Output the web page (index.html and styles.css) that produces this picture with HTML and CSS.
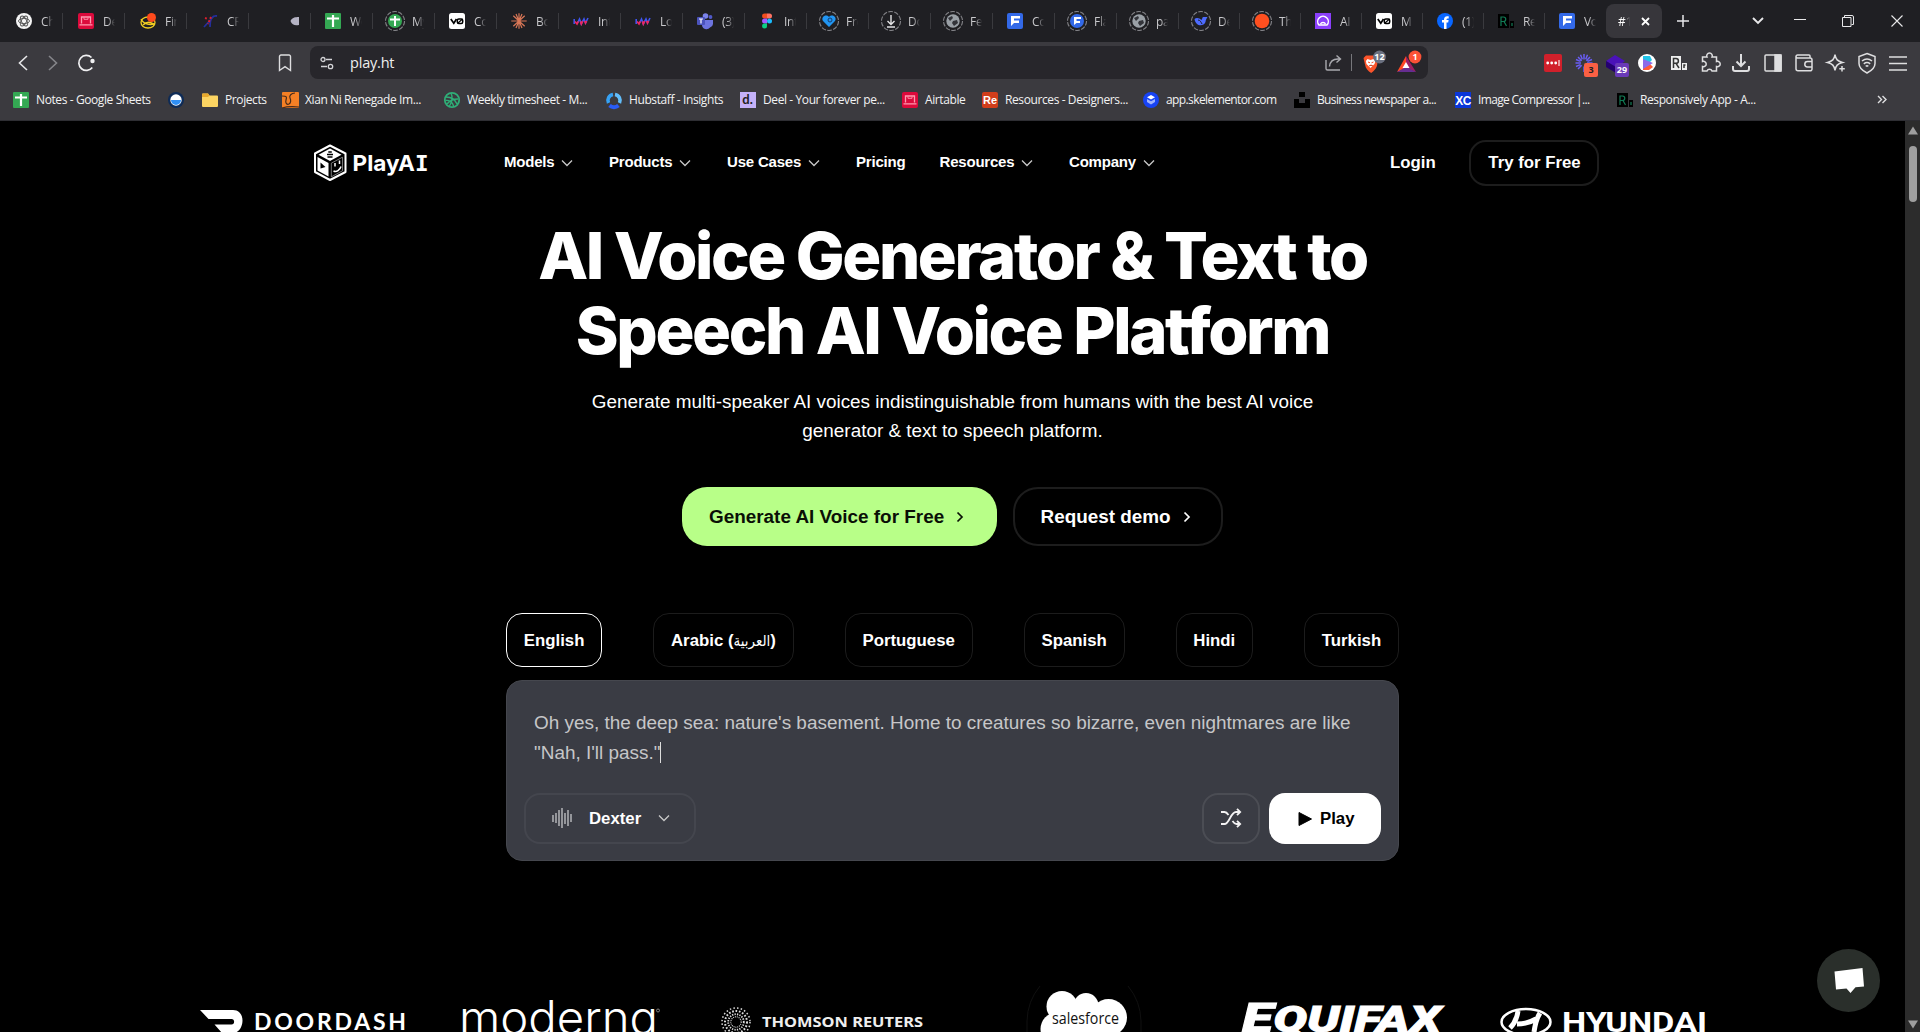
FILE: index.html
```
<!DOCTYPE html>
<html lang="en">
<head>
<meta charset="utf-8">
<title>AI Voice Generator</title>
<link rel="stylesheet" href="styles.css">
</head>
<body>
<svg class="defs" width="0" height="0" aria-hidden="true">
  <symbol id="sheet" viewBox="0 0 16 16"><rect width="16" height="16" rx="1" fill="#34a853"/><path d="M2 5.500h12M8 2v12" stroke="#fff" stroke-width="2.200"/></symbol>
  <symbol id="laptop" viewBox="0 0 16 16"><rect width="16" height="16" rx="2" fill="#dc0a3c"/><path d="M3.500 10.500V4h9v6.500M1.500 11.800h13" stroke="#ff9bb0" stroke-width="1.300" fill="none"/><path d="M6 4.500v1.800h4V4.500" stroke="#ff9bb0" stroke-width=".9" fill="none"/></symbol>
  <symbol id="vzero" viewBox="0 0 16 16"><rect width="16" height="16" rx="2.500" fill="#fff"/><path d="M1.800 6l3 4.200L7.500 6" stroke="#000" stroke-width="1.700" fill="none"/><rect x="8.300" y="6" width="5.400" height="4.400" rx="1.500" fill="none" stroke="#000" stroke-width="1.500"/><path d="M9 10l4.500-4" stroke="#000" stroke-width="1.100"/></symbol>
  <symbol id="wave" viewBox="0 0 16 16"><path d="M1.200 6v5M4 11l2.500-5 1.800 5L11 6l1.500 4L15 5" stroke="#3f55f0" stroke-width="1.600" fill="none"/><path d="M2 8.500L4 11l1.300-2.600M7.500 8.500l.8 2.500 1.300-2.800M11.700 8l.8 2 1-2" stroke="#f0255f" stroke-width="1.700" fill="none"/></symbol>
  <symbol id="ring" viewBox="0 0 20 20"><circle cx="10" cy="10" r="9.500" fill="none" stroke="#808085" stroke-width="1.100" stroke-dasharray="4.600 1.370"/></symbol>
  <symbol id="globe" viewBox="0 0 16 16"><circle cx="8" cy="8" r="6.700" fill="#9aa0a6"/><path d="M3 5l4-2 1 2-3 3zM8 8l4-1 1 3-4 3-2-3z" fill="#33343a"/></symbol>
  <symbol id="flag" viewBox="0 0 16 16"><rect width="16" height="16" rx="2" fill="#3369e8"/><path d="M4 3h9v2.500H7v2h5V10H7l-3 3z" fill="#fff"/></symbol>
  <symbol id="rr" viewBox="0 0 16 16"><path d="M0 1h11v14H0zM12 8h4v7h-4z" fill="#000"/><path d="M3 13V4h2.500a2.200 2.200 0 010 4.500H3M6 8.500l2.500 4.500M14 13v-3" stroke="#117a55" stroke-width="1.200" fill="none"/></symbol>
  <symbol id="down" viewBox="0 0 12 8"><path d="M1 1.500l5 5 5-5" stroke="currentColor" stroke-width="1.300" fill="none"/></symbol>
  <symbol id="right" viewBox="0 0 8 12"><path d="M1.500 1.500L6 6l-4.500 4.500" stroke="currentColor" stroke-width="1.700" fill="none"/></symbol>
</svg>

<header class="browser">
  <div class="tabstrip">
    <div class="tab"><svg class="fav"><circle cx="8" cy="8" r="8" fill="#f5f5f5"/><g fill="none" stroke="#555" stroke-width=".9"><ellipse cx="8" cy="8" rx="5.500" ry="2.600"/><ellipse cx="8" cy="8" rx="5.500" ry="2.600" transform="rotate(60 8 8)"/><ellipse cx="8" cy="8" rx="5.500" ry="2.600" transform="rotate(120 8 8)"/></g></svg><span>Ch</span></div>
    <div class="tab"><svg class="fav"><use href="#laptop"/></svg><span>De</span></div>
    <div class="tab"><svg class="fav"><g fill="none" stroke="#f2cf22" stroke-width="1.300"><ellipse cx="8" cy="9.500" rx="7" ry="5.500"/><path d="M1 6c3 6 9 6 14 5M3 12c4-4 7-3 11-1"/></g><circle cx="11.500" cy="4.500" r="4.500" fill="#ff4a1c"/></svg><span>Fin</span></div>
    <div class="tab"><svg class="fav"><path d="M2 14L12 3M8 14c0-8 2-12 7-11" stroke="#232f9b" stroke-width="1.800" fill="none"/><path d="M3 5l3 1M9 4L6 11" stroke="#d91e2e" stroke-width="2" stroke-dasharray="2 1.500" fill="none"/></svg><span>CR</span></div>
    <div class="tab tab-audio"><svg class="fav"><path d="M3.500 8C5 4.500 8 4 12 4v8c-4 1-7 0-8.500-4z" fill="#b5b3c4"/></svg></div>
    <div class="tab"><svg class="fav"><use href="#sheet"/></svg><span>Wo</span></div>
    <div class="tab"><svg class="fav"><use href="#ring" x="-2" y="-2" width="20" height="20"/><circle cx="8" cy="8" r="7" fill="#34a853"/><path d="M3 6.500h10M8 3v10" stroke="#fff" stroke-width="2"/></svg><span>My</span></div>
    <div class="tab"><svg class="fav"><use href="#vzero"/></svg><span>Co</span></div>
    <div class="tab"><svg class="fav"><path d="M8 .3v15.400M.3 8h15.400M2.300 2.800l11.400 10.400M13.700 2.800L2.300 13.200M5 1l6 14M11 1L5 15" stroke="#d97757" stroke-width="1.200"/></svg><span>Bo</span></div>
    <div class="tab"><svg class="fav"><use href="#wave"/></svg><span>Int</span></div>
    <div class="tab"><svg class="fav"><use href="#wave"/></svg><span>Lo</span></div>
    <div class="tab"><svg class="fav"><circle cx="8.500" cy="3" r="2.800" fill="#7b83eb"/><circle cx="13.500" cy="4" r="1.900" fill="#5059c9"/><path d="M5 7h11v4a4 4 0 01-3 3.500A4.500 4.500 0 015 12z" fill="#6d74df"/><rect y="4" width="8" height="8" rx="1" fill="#4b53bc"/><path d="M2 6h4M4 6v4.500" stroke="#fff" stroke-width="1.200"/></svg><span>(3)</span></div>
    <div class="tab"><svg class="fav"><path d="M8 .5H5.500a2.500 2.500 0 000 5H8z" fill="#f24e1e"/><path d="M8 .5h2.500a2.500 2.500 0 010 5H8z" fill="#ff7262"/><path d="M8 5.500H5.500a2.500 2.500 0 000 5H8z" fill="#a259ff"/><circle cx="10.500" cy="8" r="2.500" fill="#1abcfe"/><path d="M8 10.500H5.500a2.500 2.500 0 102.500 2.500z" fill="#0acf83"/></svg><span>Int</span></div>
    <div class="tab"><svg class="fav"><use href="#ring" x="-2" y="-2" width="20" height="20"/><path d="M8 14L2 8C-.5 4 5 .5 8 4c3-3.500 8.500 0 6 4z" fill="#2196f3"/><circle cx="9" cy="7" r="2" fill="none" stroke="#173b6b"/></svg><span>Fre</span></div>
    <div class="tab"><svg class="fav"><use href="#ring" x="-2" y="-2" width="20" height="20"/><path d="M8 2v9M4.500 8L8 11.500 11.500 8M4 14h8" stroke="#e4e4e6" stroke-width="1.400" fill="none"/></svg><span>Do</span></div>
    <div class="tab"><svg class="fav"><use href="#ring" x="-2" y="-2" width="20" height="20"/><use href="#globe"/></svg><span>Fee</span></div>
    <div class="tab"><svg class="fav"><use href="#flag"/></svg><span>Co</span></div>
    <div class="tab"><svg class="fav"><use href="#ring" x="-2" y="-2" width="20" height="20"/><circle cx="8" cy="8" r="7" fill="#3369e8"/><path d="M5 4h7v2H7.500v2H11v2H7.500L5 12z" fill="#fff"/></svg><span>Fla</span></div>
    <div class="tab"><svg class="fav"><use href="#ring" x="-2" y="-2" width="20" height="20"/><use href="#globe"/></svg><span>pa</span></div>
    <div class="tab tab-narrow"><svg class="fav"><use href="#ring" x="-2" y="-2" width="20" height="20"/><path d="M1.500 6c2-2 5-1 7 1 1-1 .5-3 2-3l4 0c-1 2-2 3-2 5-2 5-10 4.500-11-3z" fill="#4d6bfe"/><path d="M5 7c2 0 3 2 4 4" stroke="#1f1f23" fill="none"/></svg><span>De</span></div>
    <div class="tab tab-narrow"><svg class="fav"><use href="#ring" x="-2" y="-2" width="20" height="20"/><circle cx="8" cy="8" r="7.300" fill="#ff4f1f"/></svg><span>Th</span></div>
    <div class="tab tab-narrow"><svg class="fav"><rect width="16" height="16" fill="#8b3ffc"/><path d="M4 12a5.300 5.300 0 118 0zM5.500 11c1-2 4-2 5 0" stroke="#fff" stroke-width="1.500" fill="none"/></svg><span>AI</span></div>
    <div class="tab tab-narrow"><svg class="fav"><use href="#vzero"/></svg><span>M</span></div>
    <div class="tab tab-narrow"><svg class="fav"><circle cx="8" cy="8" r="8" fill="#0866ff"/><path d="M7 16V9.500H5V7h2c0-3 1.200-4.200 4.700-3.700V5.600c-1.800 0-2.200.3-2.200 1.400h2.100l-.4 2.500H9.500V16z" fill="#fff"/></svg><span>(1)</span></div>
    <div class="tab tab-narrow"><svg class="fav"><use href="#rr"/></svg><span>Re</span></div>
    <div class="tab tab-narrow tab-last"><svg class="fav"><use href="#flag"/></svg><span>Vo</span></div>
    <div class="tab-active"><span>#1</span><svg width="9" height="9"><path d="M1 1l7 7M8 1L1 8" stroke="#fff" stroke-width="1.800"/></svg></div>
    <svg class="newtab" width="12" height="12"><path d="M6 0v12M0 6h12" stroke="#e8e8ea" stroke-width="1.500"/></svg>
    <div class="winctl">
      <svg width="12" height="8"><path d="M1 1l5 5 5-5" stroke="#e8e8ea" stroke-width="1.900" fill="none"/></svg>
      <svg width="12" height="12"><path d="M0 4.500h12" stroke="#e8e8ea"/></svg>
      <svg width="12" height="12"><path d="M.5 2.500h8.500v9H.5zM2.500 2.500V.5H10a1.500 1.500 0 011.500 1.500v7.500H9.500" stroke="#e8e8ea" fill="none"/></svg>
      <svg width="12" height="12"><path d="M.5.5l11 11M11.500.5l-11 11" stroke="#e8e8ea" stroke-width="1.100"/></svg>
    </div>
  </div>

  <div class="toolbar">
    <div class="navbtns">
      <svg width="10" height="16"><path d="M9 1L1.500 8 9 15" stroke="#e6e6e8" stroke-width="1.600" fill="none"/></svg>
      <svg width="10" height="16"><path d="M1 1l7.500 7L1 15" stroke="#85858a" stroke-width="1.600" fill="none"/></svg>
      <svg width="18" height="18"><path d="M14.500 3.500a7.500 7.500 0 10.800 10" stroke="#f0f0f2" stroke-width="1.700" fill="none"/><circle cx="15.500" cy="7" r="2.200" fill="#f0f0f2"/></svg>
      <svg class="mark" width="14" height="18"><path d="M1.500 2.500a1.500 1.500 0 011.500-1.500h8a1.500 1.500 0 011.500 1.500v14L7 12.700 1.500 16.500z" stroke="#dedee0" stroke-width="1.400" fill="none"/></svg>
    </div>
    <div class="urlbar">
      <svg width="14" height="14"><g stroke="#d4d4d7" stroke-width="1.300" fill="none"><circle cx="3" cy="3.500" r="2"/><path d="M6 3.500h6M1 10.500h6"/><circle cx="10.500" cy="10.500" r="2.200"/></g></svg>
      <span class="url">play.ht</span>
      <svg class="share" width="17" height="17"><path d="M1 6v8.500a1.500 1.500 0 001.500 1.500H15M4.500 12.500C5 7.500 8 5 13 5h2M11.500 1.500L15.500 5l-4 3.500" stroke="#a9a9ae" stroke-width="1.400" fill="none"/></svg>
      <i class="vbar"></i>
      <svg class="shield" width="24" height="24"><path d="M4 4.500h9l3 3-.8 6c-.5 4-3.500 6.500-6 8.500-3-2-5.700-4.500-6.200-8.500L1.500 7z" fill="#fb542b"/><path d="M5.500 8l3 1 3-1 2 2-1 3-2 2-2 2-2-2-2-2-.6-3z" fill="#fff"/><path d="M6 11l2 .8M11.500 11l-2 .8M7 15l2-1 2 1" stroke="#fb542b"/><circle cx="17.500" cy="6" r="6.400" fill="#6b7080"/><text x="17.500" y="8.800" class="badge">12</text></svg>
      <svg class="bat" width="26" height="24"><path d="M10 5L1 21l9-4z" fill="#ff4724"/><path d="M10 5l10 16-10-4z" fill="#9e1f63"/><path d="M1 21h19l-10-5z" fill="#662d91"/><path d="M10 11l3.500 6h-7z" fill="#fff"/><circle cx="19" cy="6" r="6.400" fill="#fb5236"/><text x="19" y="8.800" class="badge">1</text></svg>
    </div>
    <div class="exts">
      <svg><rect x="3" y="3" width="18" height="18" rx="2" fill="#d1202b"/><g fill="#fff"><circle cx="6.700" cy="12" r="1.400"/><circle cx="10.700" cy="12" r="1.400"/><circle cx="14.700" cy="12" r="1.400"/><path d="M17.500 9h1v6h-1z"/></g></svg>
      <svg><g class="burst"><path d="M12 3v5.500M12 15.500V21M3.500 12H9M15 12h5.500M6 6l3.700 3.700M18 6l-3.700 3.700M6 18l3.700-3.700M8.500 3.800l1.800 4.500M15.500 3.800l-1.800 4.500M4 8.500l4.500 1.900M20 8.500l-4.500 1.900M4 15.500l4.500-1.900"/></g><rect x="12" y="12" width="14" height="14" rx="2" fill="#fb6044"/><text x="19" y="22" class="badge dark">3</text></svg>
      <svg><path d="M2 10l9-6 10 6-9 7z" fill="#4a12b8"/><path d="M2 10v6l10 6v-6z" fill="#240070"/><rect x="11" y="12" width="14" height="14" rx="2" fill="#6a3ab7"/><text x="18" y="22.200" class="badge">29</text></svg>
      <svg><circle cx="12" cy="12" r="9" fill="#fff"/><path d="M8 5h7l2 4-3 3H8z" fill="#21c4e8"/><path d="M8 12h6l4 4-4 3H8z" fill="#ff5a36"/><path d="M8 8v10l10-6z" fill="#8c6be8"/></svg>
      <svg><path d="M4 5h10v14H4zM15 12h5v7h-5z" fill="#eee"/><path class="r-glyph" d="M6.500 17V7.500H9a2.300 2.300 0 010 4.800H6.500M9 12.300l3 4.700M17 17v-3h1.500"/></svg>
      <svg><path d="M4.500 6H9a2.800 2.800 0 115 0h4.500v4.500a2.700 2.700 0 110 5V20H14a2.700 2.700 0 00-5 0H4.500v-4.500a2.700 2.700 0 100-5z"/></svg>
      <svg><path d="M12 3v12M7.500 10.500L12 15l4.500-4.500M4 15v3a2 2 0 002 2h12a2 2 0 002-2v-3" stroke-width="2"/></svg>
      <svg><rect x="4" y="4" width="16" height="16" rx="1"/><path d="M14 4h6v16h-6z" fill="#dedee0"/></svg>
      <svg><path d="M5.500 4H17a1 1 0 011 1v2M5.500 7H18a2 2 0 012 2v9a1.800 1.800 0 01-2 1.800H6a2 2 0 01-2-2V5.500A1.500 1.500 0 015.500 4M4 5.500A1.500 1.500 0 005.500 7M20 10.500h-4.500a2.700 2.700 0 000 5.400H20"/></svg>
      <svg><path d="M11 3.500c.8 5 2.500 6.700 7.500 8-5 1.300-6.700 3-7.500 8-.8-5-2.500-6.700-7.500-8 5-1.300 6.700-3 7.500-8z"/><path class="knock" d="M18 14v7.500M14.500 17.800h7"/><path d="M18 15v5.500M15.300 17.800h5.500"/></svg>
      <svg><path d="M12 2.500l8 3v7c0 4.500-4 7.500-8 9.500-4-2-8-5-8-9.500v-7zM7 10c3-2.500 7-2.500 10 0M8.800 12.800c2-1.600 4.400-1.600 6.400 0M10.700 15.300c1-.8 1.600-.8 2.600 0"/></svg>
      <svg><path d="M3 6h18M3 12.500h18M3 19h18"/></svg>
    </div>
  </div>

  <nav class="bookmarks">
    <a><svg class="fav"><use href="#sheet"/></svg><span>Notes - Google Sheets</span></a>
    <a><svg class="fav"><circle cx="8" cy="8" r="8" fill="#0e2b57"/><circle cx="8" cy="8" r="5.700" fill="#fff"/><path d="M3 8h10a5 5 0 01-10 0z" fill="#2f8ff5"/></svg></a>
    <a><svg class="fav"><path d="M0 2.500a1 1 0 011-1h5l1.500 2H15a1 1 0 011 1V14a1 1 0 01-1 1H1a1 1 0 01-1-1z" fill="#fcd462"/><path d="M0 2.500a1 1 0 011-1h5l1.500 2L6 5H0z" fill="#e8a92e"/></svg><span>Projects</span></a>
    <a><svg class="fav"><rect width="17" height="16" rx="1" fill="#f58025"/><path d="M0 4c5 0 5 1 4 4s1 5 3 4 2-4 1-6 1-5 5-5M0 16c3-1 9-2 17-1" stroke="#4a2c1a" stroke-width="1.200" fill="none"/></svg><span>Xian Ni Renegade Im...</span></a>
    <a><svg class="fav"><circle cx="8" cy="8" r="7.200" fill="none" stroke="#2fae77" stroke-width="1.800"/><path d="M2 5c5 0 9 2 11 7M3 12c3-4 6-5 11-5M7 1c2 4 1 9-2 14M1.500 8.500C5 8 9 10 10 15" stroke="#2fae77" stroke-width="1.400" fill="none"/></svg><span>Weekly timesheet - M...</span></a>
    <a><svg class="fav"><path d="M7 2.500A6 6 0 002.500 11" stroke="#36a2f5" stroke-width="3.600" fill="none"/><path d="M9 2.500A6 6 0 0113.500 11" stroke="#62bdfa" stroke-width="3.600" fill="none"/><path d="M3.500 13.500a7 7 0 009 0" stroke="#2a5cf6" stroke-width="4" fill="none"/></svg><span>Hubstaff - Insights</span></a>
    <a><svg class="fav"><rect width="16" height="16" fill="#c4b1f9"/><text x="7.500" y="12" class="ico-d">d.</text></svg><span>Deel - Your forever pe...</span></a>
    <a><svg class="fav"><use href="#laptop"/></svg><span>Airtable</span></a>
    <a><svg class="fav"><rect width="16" height="16" rx="2" fill="#d13d1b"/><text x="8" y="12.300" class="ico-re">Re</text></svg><span>Resources - Designers...</span></a>
    <a><svg class="fav"><circle cx="8" cy="8" r="8" fill="#1743f5"/><path d="M8 3l4 2.200-4 2.200-4-2.200z" fill="#fff"/><path d="M4 7l4 2.200L12 7v3l-4 2.500L4 10z" fill="#9fb3ff"/></svg><span class="tight">app.skelementor.com</span></a>
    <a><svg class="fav"><path d="M5 0h6v5H5zM0 7h5v4h6V7h5v9H0z" fill="#000"/></svg><span class="tighter">Business newspaper a...</span></a>
    <a><svg class="fav"><rect width="16" height="16" fill="#0a36d8"/><text x="8" y="12.500" class="ico-xc">XC</text></svg><span class="tighter">Image Compressor |...</span></a>
    <a><svg class="fav"><use href="#rr"/></svg><span>Responsively App - A...</span></a>
    <svg class="more" width="10" height="9"><path d="M1 1l3.500 3.500L1 8M5.500 1L9 4.500 5.500 8" stroke="#dedee0" stroke-width="1.400" fill="none"/></svg>
  </nav>
</header>

<div class="viewport">
<main class="page">
  <div class="site-nav">
    <div class="logo">
      <svg width="116" height="38">
        <path d="M17 1.500L32.500 9.500v18.500L17 36 2 28V9.500z" fill="none" stroke="#fff" stroke-width="2" stroke-linejoin="round"/>
        <path d="M17 4.500l11.500 6.200L17 17 5.500 10.700z" fill="#fff"/>
        <path d="M4.500 13l11 6v13.500l-11-6z" fill="#fff"/>
        <path d="M18.300 19.200L29.500 13.200v13.600L18.300 32.800z" fill="none" stroke="#aaa" stroke-width=".7"/>
        <path d="M7.500 18.500l5 4.500-5 1.500z" fill="#000"/>
        <path d="M14 10.500h6M15.300 8h3.500M14.500 13h5" stroke="#000" stroke-width="1.300"/>
        <path d="M22 19v3.500M26.500 16.500V20M20.500 27c3 1.500 6.500-1 7.500-4.500" stroke="#fff" stroke-width="1.500" fill="none"/>
        <text x="39.500" y="26.500" textLength="76" lengthAdjust="spacingAndGlyphs" class="logo-text">PlayA<tspan class="slab">I</tspan></text>
      </svg>
    </div>
    <div class="menu">
      <a>Models <svg width="12" height="8"><use href="#down"/></svg></a>
      <a>Products <svg width="12" height="8"><use href="#down"/></svg></a>
      <a>Use Cases <svg width="12" height="8"><use href="#down"/></svg></a>
      <a>Pricing</a>
      <a>Resources <svg width="12" height="8"><use href="#down"/></svg></a>
      <a>Company <svg width="12" height="8"><use href="#down"/></svg></a>
    </div>
    <a class="login">Login</a>
    <a class="try">Try for Free</a>
  </div>

  <section class="hero">
    <h1>AI Voice Generator &amp; Text to<br>Speech AI Voice Platform</h1>
    <p class="lead">Generate multi-speaker AI voices indistinguishable from humans with the best AI voice<br>generator &amp; text to speech platform.</p>
    <div class="cta">
      <a class="btn primary">Generate AI Voice for Free <svg width="8" height="12"><use href="#right"/></svg></a>
      <a class="btn outline">Request demo <svg width="8" height="12"><use href="#right"/></svg></a>
    </div>
  </section>

  <section class="demo">
    <div class="langs">
      <span class="lang on">English</span>
      <span class="lang">Arabic (<bdi class="ar">العربية</bdi>)</span>
      <span class="lang">Portuguese</span>
      <span class="lang">Spanish</span>
      <span class="lang">Hindi</span>
      <span class="lang">Turkish</span>
    </div>
    <div class="panel">
      <p class="script">Oh yes, the deep sea: nature's basement. Home to creatures so bizarre, even nightmares are like<br>"Nah, I'll pass."<i class="caret"></i></p>
      <div class="controls">
        <div class="voice">
          <svg width="20" height="20"><path d="M1 7v7M4 5v10M7 2v16M10 0v20M13 5v11M16 2v16M19 6v8" stroke="#a5a6aa" stroke-width="1.700"/></svg>
          <span>Dexter</span>
          <svg width="12" height="8"><use href="#down"/></svg>
        </div>
        <div class="shuffle"><svg width="20" height="20"><path d="M0 4h3.500c2 0 3 1.500 4 3M11.500 13c1 1.500 2 3 4 3H19M0 16h3.500C8.500 16 9.500 4 15 4h4M16 .8L19.200 4 16 7.200M16 12.800l3.200 3.200-3.200 3.200" stroke="#f2f2f3" stroke-width="1.800" fill="none"/></svg></div>
        <div class="play"><svg width="14" height="16"><path d="M1 1.500v13L13.500 8z" fill="#000" stroke="#000" stroke-linejoin="round"/></svg>Play</div>
      </div>
    </div>
  </section>

  <section class="brands">
    <svg width="210" height="52"><path d="M0 30h33c6 0 9.500 4.500 9.500 10.500S39 53 33 53H22l-7.500-8.500h17c3.500 0 3.500-5.500 0-5.500H8.500z" fill="#fff"/><text x="54" y="50" textLength="152" class="b-door">DOORDASH</text></svg>
    <svg width="200" height="52"><text x="-3" y="53.500" textLength="199" lengthAdjust="spacingAndGlyphs" class="b-mod">moderna</text><circle cx="196" cy="30.500" r="1.500" fill="none" stroke="#999" stroke-width=".8"/></svg>
    <svg width="204" height="52"><g fill="none" stroke="#ddd"><circle cx="15" cy="42" r="14" stroke-width="1.500" stroke-dasharray="1.500 2.200"/><circle cx="15" cy="42" r="11" stroke-width="2" stroke-dasharray="1.700 1.700"/><circle cx="15" cy="42" r="7.800" stroke-width="1.800" stroke-dasharray="1.300 1.200"/><circle cx="15" cy="42" r="5.200" stroke-width="1.100" stroke-dasharray="1 .9"/></g><text x="41" y="47" textLength="161" lengthAdjust="spacingAndGlyphs" class="b-tr">THOMSON REUTERS</text></svg>
    <svg width="118" height="52"><path d="M14 6A57 57 0 001 41v11M102 6a57 57 0 0113 35v11" fill="none" stroke="#101010"/><g fill="#fff"><circle cx="36" cy="26.500" r="15.500"/><circle cx="60" cy="25.500" r="12.500"/><circle cx="82.500" cy="37.500" r="18.500"/><circle cx="31" cy="49" r="16.500"/><path d="M35 28h45v26H35z"/></g><text x="26" y="44" textLength="67" lengthAdjust="spacingAndGlyphs" class="b-sf">salesforce</text></svg>
    <svg width="206" height="52"><text x="0" y="52" textLength="199" lengthAdjust="spacingAndGlyphs" class="b-eq"><tspan class="big">E</tspan>QUIFAX</text></svg>
    <svg width="210" height="52"><ellipse cx="26" cy="42" rx="24.500" ry="13" fill="none" stroke="#fff" stroke-width="2.500"/><path d="M18 31c-1 7-3 12-8 17M40 33c-4 6-5 12-6 19M17 44c8 0 14-2 19-5" stroke="#fff" stroke-width="5" fill="none"/><text x="62" y="52" textLength="145" lengthAdjust="spacingAndGlyphs" class="b-hy">HYUNDAI</text></svg>
  </section>
</main>
<aside class="scrollbar"><svg width="10" height="9"><path d="M5 .5L10 8.500H0z" fill="#9f9f9f"/></svg><i></i><svg class="end" width="10" height="9"><path d="M0 .5h10l-5 8z" fill="#9f9f9f"/></svg></aside>
<div class="chat"><svg width="30" height="26"><path d="M.5 3.500L28.500 0l1.500 18.500-8.500.8L16.500 25l-4-4.600L2 21.500z" fill="#fff"/></svg></div>
</div>
</body>
</html>
```
FILE: styles.css
```
* { box-sizing: border-box; }
body { margin: 0; width: 1920px; height: 1032px; overflow: hidden; background: #000; color: #fff; font-family: "Liberation Sans", Arial, sans-serif; }
svg { display: block; flex: none; overflow: visible; }
.defs { position: absolute; }
.fav { width: 16px; height: 16px; }

/* browser chrome */
.browser { height: 121px; background: #3b3a3f; border-bottom: 1px solid #2e2e33; font-family: "Open Sans", "Noto Sans", sans-serif; font-size: 12px; }
.tabstrip { height: 42px; display: flex; align-items: center; background: #1f1f23; padding-left: 1px; }
.tab { width: 62px; height: 16px; display: flex; align-items: center; gap: 9px; padding-left: 15px; border-right: 1px solid #3a3a3e; flex: none; color: #c9c9cc; }
.tab:nth-child(n+6) { padding-left: 14px; }
.tab-narrow { width: 61px; }
.tab-last { border-color: transparent; }
.tab.tab-audio { padding-left: 38px; }
.tab span { width: 12px; overflow: hidden; white-space: nowrap; letter-spacing: -0.3px; -webkit-mask-image: linear-gradient(90deg, #000 40%, transparent); mask-image: linear-gradient(90deg, #000 40%, transparent); }
.tab-active { width: 56px; height: 34px; border-radius: 8px; background: #37363b; display: flex; align-items: center; gap: 11px; padding-left: 12px; }
.tab-active span { width: 12px; overflow: hidden; -webkit-mask-image: linear-gradient(90deg, #000 50%, transparent); mask-image: linear-gradient(90deg, #000 50%, transparent); }
.newtab { margin-left: 15px; }
.winctl { margin-left: auto; display: flex; align-items: center; gap: 34px; padding-right: 17px; }
.winctl svg:nth-child(1) { margin-right: -4px; }
.winctl svg:nth-child(3) { margin-left: 2px; }
.winctl svg:nth-child(4) { margin-left: 3px; }
.toolbar { height: 41px; display: flex; align-items: center; }
.navbtns { width: 310px; display: flex; align-items: center; padding-left: 18px; gap: 20px; }
.navbtns svg:nth-child(3) { margin-left: -1px; }
.navbtns .mark { margin: 0 18px 0 auto; }
.urlbar { width: 1118px; height: 33px; border-radius: 8px; background: #27262b; display: flex; align-items: center; padding: 0 6px 0 10px; }
.url { margin-left: 16px; font-size: 14.500px; letter-spacing: -0.2px; color: #eee; }
.share { margin-left: auto; }
.vbar { width: 1px; height: 17px; background: #77777c; margin: 0 10px 0 9px; }
.shield { margin-right: 10px; }
.badge { font: bold 9px "Open Sans", sans-serif; fill: #fff; text-anchor: middle; }
.badge.dark { fill: #222; }
.exts { margin-left: 113px; display: flex; gap: 7.400px; }
.exts svg { width: 24px; height: 24px; fill: none; stroke: #dedee0; stroke-width: 1.500; }
.exts svg:nth-child(-n+5), .exts text { stroke: none; }
.exts .burst { stroke: #6a5df5; stroke-width: 1.500; }
.exts .r-glyph { stroke: #333; stroke-width: 1.500; }
.exts .knock { stroke: #3b3a3f; stroke-width: 4; }
.bookmarks { height: 33px; display: grid; align-items: center; padding-left: 13px; grid-template-columns: 155px 34px 80px 162px 162px 134px 162px 80px 161px 151px 161px 162px 260px 10px; }
.bookmarks a { display: flex; align-items: center; gap: 7px; height: 20px; white-space: nowrap; letter-spacing: -0.400px; color: #f2f2f3; }
.bookmarks .tight { letter-spacing: -0.600px; }
.bookmarks .tighter { letter-spacing: -0.650px; }
.ico-d { font: bold 13px "Lato", sans-serif; text-anchor: middle; letter-spacing: 0; fill: #222; }
.ico-re { font: bold 11px "Liberation Sans", sans-serif; text-anchor: middle; letter-spacing: 0; fill: #fff; }
.ico-xc { font: bold 12px "Liberation Sans", sans-serif; text-anchor: middle; letter-spacing: -0.500px; fill: #fff; }

/* page */
.viewport { display: flex; height: 911px; position: relative; }
.page { width: 1905px; padding-top: 19px; }
.scrollbar { width: 15px; background: #2c2c2c; display: flex; flex-direction: column; align-items: center; padding: 5px 0 3px; }
.scrollbar i { width: 8px; height: 56px; border-radius: 4px; background: #9f9f9f; margin-top: 11px; }
.scrollbar .end { margin-top: auto; }
.site-nav { height: 46px; display: flex; align-items: center; padding-left: 313px; }
.logo { width: 191px; height: 38px; }
.logo-text { font: bold 22px Inter, sans-serif; fill: #fff; }
.slab { font-family: "DejaVu Sans Mono", monospace; }
.menu { width: 886px; display: grid; grid-template-columns: 105px 118px 129px 83.500px 129.500px auto; font-size: 15px; font-weight: bold; letter-spacing: -0.200px; padding-bottom: 3px; }
.menu a { display: flex; align-items: center; gap: 7px; height: 18px; }
.menu svg { color: #c8c8c8; margin-top: 2px; }
.login { width: 79px; font-size: 16.800px; font-weight: bold; }
.try { width: 130px; height: 46px; border: 2px solid #1d1d1d; border-radius: 17px; display: flex; align-items: center; justify-content: center; font-size: 16.800px; font-weight: bold; padding-left: 1px; }
.hero { display: flex; flex-direction: column; align-items: center; text-align: center; }
h1 { margin: 32px 0 0; font: 800 65px/75px Inter, sans-serif; letter-spacing: -2.400px; white-space: nowrap; }
.lead { margin: 19px 0 0; font-size: 18.900px; line-height: 29.300px; white-space: nowrap; }
.cta { margin-top: 41px; display: flex; gap: 16px; }
.btn { height: 59px; border-radius: 25px; display: flex; align-items: center; gap: 12px; font-size: 18.900px; font-weight: bold; white-space: nowrap; padding-left: 27px; padding-top: 1px; }
.primary { width: 315px; background: #b8ff88; color: #0a0f06; }
.outline { width: 210px; border: 2px solid #1d1d1d; padding-left: 25.500px; }
.demo { width: 893px; margin: 67px 0 0 506px; }
.langs { display: flex; justify-content: space-between; }
.lang { height: 54px; padding: 2px 16.800px 0; border: 1px solid #1c1c1c; border-radius: 16px; display: flex; align-items: center; font-size: 16.800px; font-weight: bold; }
.lang.on { border-color: #fff; }
.ar { font-family: "DejaVu Sans Condensed", "DejaVu Sans", sans-serif; font-stretch: condensed; font-weight: normal; font-size: 15px; }
.panel { margin-top: 13px; height: 181px; border: 1px solid #45474e; border-radius: 16px; background: #3a3c44; padding: 27px 17px 16px; display: flex; flex-direction: column; justify-content: space-between; }
.script { margin: 0 10px; font-size: 18.930px; line-height: 30px; color: #c6c6c8; white-space: nowrap; }
.caret { display: inline-block; width: 1px; height: 21px; background: #ddd; vertical-align: -4px; }
.controls { display: flex; gap: 9px; font-size: 16.800px; font-weight: bold; }
.voice { width: 172px; height: 51px; border: 2px solid #44464e; border-radius: 16px; display: flex; align-items: center; padding-left: 26px; }
.voice span { width: 53px; margin: 0 16px 0 17px; padding-top: 1px; }
.voice svg { color: #c8c8c8; }
.shuffle { margin-left: auto; width: 58px; height: 51px; border: 2px solid #4b4d54; border-radius: 16px; display: grid; place-items: center; }
.play { width: 112px; height: 51px; border-radius: 16px; background: #fff; color: #000; display: flex; align-items: center; gap: 8px; padding: 1px 0 0 29px; }
.brands { margin-top: 119px; height: 52px; display: grid; padding-left: 200px; grid-template-columns: 262px 259px 305px 216px 258px 210px; }
.b-door { font: bold 23px "Lato", sans-serif; fill: #fff; }
.b-mod { font: 300 46px Inter, sans-serif; font-feature-settings: "cv11" 1; fill: #fff; }
.b-tr { font: bold 15px "Noto Sans", sans-serif; fill: #eee; }
.b-sf { font: 17px "Open Sans", sans-serif; fill: #111; }
.b-eq { font: italic 900 36px "Roboto", sans-serif; fill: #fff; stroke: #fff; stroke-width: 0.800px; }
.b-eq .big { font-size: 41px; }
.b-hy { font: bold 27px "Roboto", sans-serif; fill: #fff; }
.chat { position: absolute; left: 1817px; top: 828px; width: 63px; height: 63px; border-radius: 50%; background: #2a2f2b; display: grid; place-items: center; }
```
